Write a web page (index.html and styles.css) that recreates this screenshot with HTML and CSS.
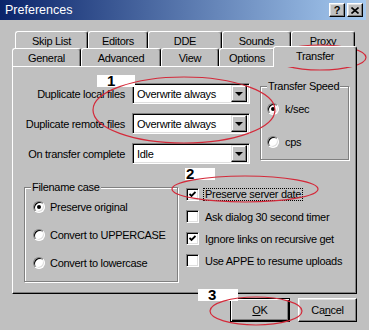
FILE: index.html
```html
<!DOCTYPE html>
<html>
<head>
<meta charset="utf-8">
<title>Preferences</title>
<link rel="stylesheet" href="styles.css">
</head>
<body>
<div class="window">
  <div class="titlebar">
    <span class="title">Preferences</span>
    <div class="tb-btns">
      <span class="tbtn">?</span>
      <span class="tbtn"><svg width="8" height="7" viewBox="0 0 8 7"><path d="M0.5 0.5L7.5 6.5M7.5 0.5L0.5 6.5" stroke="#000" stroke-width="1.6"/></svg></span>
    </div>
  </div>

  <div class="tabs">
    <div class="tabrow back">
      <div class="tab w73">Skip List</div>
      <div class="tab w60">Editors</div>
      <div class="tab w74">DDE</div>
      <div class="tab w69">Sounds</div>
      <div class="tab w64">Proxy</div>
    </div>
    <div class="tabrow front">
      <div class="tab w69">General</div>
      <div class="tab w80">Advanced</div>
      <div class="tab w58">View</div>
      <div class="tab w56">Options</div>
      <div class="tab sel">Transfer</div>
    </div>
  </div>

  <div class="panel">
    <div class="top">
      <div class="form">
        <span class="lbl">Duplicate local files</span>
        <div class="combo"><span class="val">Overwrite always</span><span class="drop"><i class="arrow"></i></span></div>
        <span class="lbl">Duplicate remote files</span>
        <div class="combo"><span class="val">Overwrite always</span><span class="drop"><i class="arrow"></i></span></div>
        <span class="lbl">On transfer complete</span>
        <div class="combo"><span class="val">Idle</span><span class="drop"><i class="arrow"></i></span></div>
      </div>
      <fieldset class="group speed">
        <legend>Transfer Speed</legend>
        <div class="opt first"><span class="radio on"></span><span>k/sec</span></div>
        <div class="opt second"><span class="radio"></span><span>cps</span></div>
      </fieldset>
    </div>
    <div class="bottom">
      <fieldset class="group case">
        <legend>Filename case</legend>
        <div class="opt"><span class="radio on"></span><span>Preserve original</span></div>
        <div class="opt"><span class="radio"></span><span>Convert to UPPERCASE</span></div>
        <div class="opt"><span class="radio"></span><span>Convert to lowercase</span></div>
      </fieldset>
      <div class="checks">
        <div class="chk"><span class="box"><svg width="7" height="7" viewBox="0 0 7 7"><path d="M0.5 3L2.5 5L6.5 1" fill="none" stroke="#000" stroke-width="1.8"/></svg></span><span class="focus">Preserve server date</span></div>
        <div class="chk"><span class="box"></span><span class="txt">Ask dialog 30 second timer</span></div>
        <div class="chk"><span class="box"><svg width="7" height="7" viewBox="0 0 7 7"><path d="M0.5 3L2.5 5L6.5 1" fill="none" stroke="#000" stroke-width="1.8"/></svg></span><span class="txt">Ignore links on recursive get</span></div>
        <div class="chk"><span class="box"></span><span class="txt">Use APPE to resume uploads</span></div>
      </div>
    </div>
  </div>

  <div class="buttons">
    <div class="btn ok"><span><u>O</u>K</span></div>
    <div class="btn cancel"><span>Ca<u>n</u>cel</span></div>
  </div>

  <div class="mark m1">1</div>
  <div class="mark m2">2</div>
  <div class="mark m3">3</div>

  <svg class="ink" width="369" height="330" viewBox="0 0 369 330">
    <ellipse cx="184" cy="110" rx="91" ry="33" />
    <ellipse cx="320" cy="57.5" rx="46" ry="12.5" />
    <ellipse cx="245" cy="189" rx="73" ry="13" />
    <ellipse cx="256" cy="311" rx="46" ry="14" />
  </svg>
</div>
</body>
</html>
```

FILE: styles.css
```css
* { box-sizing: border-box; }
html, body { margin: 0; background: #c0c0c0; }
body {
  font-family: "Liberation Sans", Arial, sans-serif;
  font-size: 11px;
  letter-spacing: -0.3px;
  color: #000;
}
.window {
  position: relative;
  width: 369px;
  height: 330px;
  overflow: hidden;
  background: #c0c0c0;
}

/* title bar */
.titlebar {
  width: 366px;
  height: 20px;
  display: flex;
  align-items: center;
  justify-content: space-between;
  padding: 0 3px 0 5px;
  background: linear-gradient(to right, #0a246a, #a6caf0);
}
.title { color: #fff; font-size: 12.5px; letter-spacing: 0; }
.tb-btns { display: flex; gap: 2px; }
.tbtn {
  width: 16px;
  height: 14px;
  background: #c0c0c0;
  border: 1px solid;
  border-color: #fff #000 #000 #fff;
  box-shadow: inset -1px -1px #808080, inset 1px 1px #dfdfdf;
  display: flex;
  align-items: center;
  justify-content: center;
  font-weight: bold;
  font-size: 11px;
  letter-spacing: 0;
  line-height: 1;
}

/* tabs */
.tabs { margin-top: 11px; }
.tabrow { display: flex; }
.tabrow.back { height: 17px; padding-left: 15px; }
.tabrow.front { height: 18px; padding-left: 12px; }
.tab {
  height: 100%;
  flex: none;
  background: #c0c0c0;
  border-top: 1px solid #fff;
  border-left: 1px solid #fff;
  border-right: 1px solid #000;
  box-shadow: inset -1px 0 #808080;
  border-radius: 3px 3px 0 0;
  display: flex;
  align-items: center;
  justify-content: center;
  padding-top: 1px;
}
.w56 { width: 56px; }
.w58 { width: 58px; }
.w60 { width: 60px; }
.w64 { width: 64px; }
.w69 { width: 69px; }
.w73 { width: 73px; }
.w74 { width: 74px; }
.w80 { width: 80px; }
.tab.sel {
  position: relative;
  z-index: 1;
  width: 84px;
  height: 21px;
  margin-top: -2px;
  margin-left: -2px;
  padding-bottom: 3px;
}

/* panel */
.panel {
  margin-left: 12px;
  width: 345px;
  height: 228px;
  border: 1px solid;
  border-color: #fff #000 #000 #fff;
  box-shadow: inset -1px -1px #808080;
  padding: 13px 0 0 11px;
}
.top { display: flex; align-items: flex-start; }
.form {
  margin-top: 3px;
  display: grid;
  grid-template-columns: 101px 118px;
  column-gap: 7px;
  row-gap: 9px;
}
.lbl { align-self: center; text-align: right; white-space: nowrap; }
.combo {
  height: 21px;
  display: flex;
  align-items: center;
  justify-content: space-between;
  background: #fff;
  border: 1px solid;
  border-color: #808080 #fff #fff #808080;
  box-shadow: inset 1px 1px #000, inset -1px -1px #dfdfdf;
  padding: 2px 2px 2px 4px;
}
.drop {
  width: 16px;
  height: 17px;
  background: #c0c0c0;
  border: 1px solid;
  border-color: #dfdfdf #000 #000 #dfdfdf;
  box-shadow: inset -1px -1px #808080, inset 1px 1px #fff;
  display: flex;
  align-items: center;
  justify-content: center;
}
.arrow {
  width: 0;
  height: 0;
  border-left: 4px solid transparent;
  border-right: 4px solid transparent;
  border-top: 4px solid #000;
}

/* group boxes */
.group {
  margin: 0;
  min-width: 0;
  border: 1px solid #808080;
  box-shadow: 1px 1px 0 #fff, inset 1px 1px 0 #fff;
  padding: 0 0 0 7px;
}
.group legend {
  padding: 0 1px;
  margin-left: -1px;
  line-height: 13px;
  background: #c0c0c0;
}
.speed { margin-left: 10px; width: 89px; height: 80px; }
.opt { display: flex; align-items: center; height: 20px; gap: 6px; }
.speed .opt { margin-left: -1px; }
.speed .first { margin-top: 6px; }
.speed .second { margin-top: 13px; }
.radio {
  flex: none;
  width: 12px;
  height: 12px;
  border-radius: 50%;
  background: #fff;
  border: 1px solid;
  border-color: #808080 #fff #fff #808080;
  box-shadow: inset 1px 1px #000, inset -1px -1px #dfdfdf;
  display: flex;
  align-items: center;
  justify-content: center;
}
.radio.on::after {
  content: "";
  width: 4px;
  height: 4px;
  border-radius: 50%;
  background: #000;
}

.bottom { display: flex; align-items: flex-start; margin-top: 17px; }
.case { width: 154px; height: 101px; }
.case .opt { margin-left: 1px; gap: 5px; margin-top: 8px; }
.case .opt:first-of-type { margin-top: 3px; }

.checks {
  margin-left: 8px;
  margin-top: 7px;
  display: flex;
  flex-direction: column;
  gap: 9px;
}
.chk { display: flex; align-items: center; height: 13px; gap: 4px; }
.box {
  flex: none;
  width: 13px;
  height: 13px;
  background: #fff;
  border: 1px solid;
  border-color: #808080 #fff #fff #808080;
  box-shadow: inset 1px 1px #000, inset -1px -1px #dfdfdf;
  display: flex;
  align-items: center;
  justify-content: center;
}
.txt { padding-left: 2px; white-space: nowrap; }
.focus {
  border: 1px dotted #000;
  padding: 0 1px;
  line-height: 11px;
  white-space: nowrap;
}

/* buttons */
.buttons {
  width: 357px;
  margin-top: 4px;
  display: flex;
  justify-content: flex-end;
  gap: 8px;
}
.btn {
  height: 24px;
  display: flex;
  align-items: center;
  justify-content: center;
  background: #c0c0c0;
  border: 1px solid;
  border-color: #fff #000 #000 #fff;
  box-shadow: inset -1px -1px #808080, inset 1px 1px #dfdfdf;
}
.btn.ok {
  width: 60px;
  border: 1px solid #000;
  box-shadow: inset 1px 1px #fff, inset -1px -1px #000, inset -2px -2px #808080;
}
.btn.cancel { width: 59px; }

/* annotation overlays */
.mark {
  position: absolute;
  background: #fff;
  height: 12px;
  font-weight: bold;
  font-size: 15px;
  line-height: 12px;
  letter-spacing: 0;
}
.m1 { left: 97px; top: 75px; width: 38px; padding-left: 10px; }
.m2 { left: 185px; top: 168px; width: 30px; padding-left: 1px; }
.m3 { left: 198px; top: 289px; width: 40px; padding-left: 10px; }
.ink {
  position: absolute;
  left: 0;
  top: 0;
  pointer-events: none;
  fill: none;
  stroke: #d42a3a;
  stroke-width: 1.2;
}
```
